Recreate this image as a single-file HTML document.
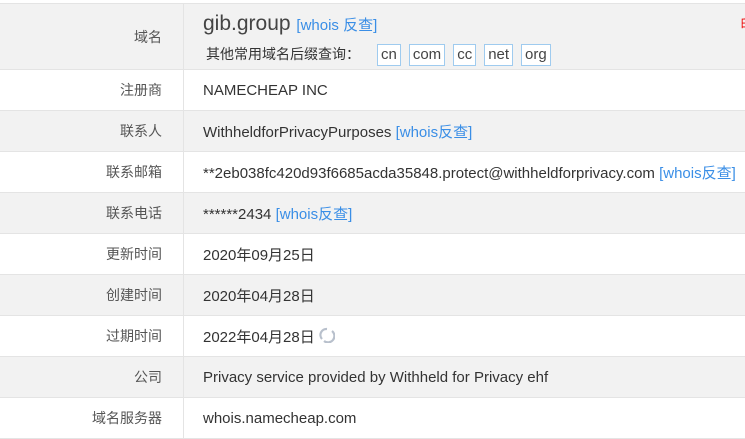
<!DOCTYPE html>
<html><head><meta charset="utf-8"><style>
body{margin:0;width:745px;height:438px;overflow:hidden;background:#fff;font-family:"Liberation Sans","Noto Sans CJK SC",sans-serif;color:#333;position:relative}
table{border-collapse:collapse;position:absolute;top:3px;left:0;width:760px}
td{border-top:1px solid #e4e4e4;border-bottom:1px solid #e4e4e4;height:40px;font-size:15px;padding:0}
td.l{width:162px;padding-right:21px;text-align:right;color:#555;font-size:14px;border-right:1px solid #e4e4e4}
td.v{padding-left:19px}
tr.g td{background:#f2f2f2}
a{color:#3a8ee6;text-decoration:none}
.tag{display:inline-block;border:1px solid #9fcbef;padding:0 3px;height:20px;line-height:20px;margin-right:8px;font-size:15px;color:#444;background:#fff}
</style></head><body>
<table>
<tr class="g"><td class="l" style="height:65px">域名</td><td class="v" style="padding-top:3px">
<div style="font-size:21px;color:#444;line-height:26px">gib.group <a style="font-size:15px">[whois 反查]</a></div>
<div style="font-size:14px;margin-top:4px;line-height:22px;padding-left:3px">其他常用域名后缀查询：<span style="display:inline-block;width:17px"></span><span class="tag">cn</span><span class="tag">com</span><span class="tag">cc</span><span class="tag">net</span><span class="tag">org</span></div>
</td></tr>
<tr><td class="l">注册商</td><td class="v">NAMECHEAP INC</td></tr>
<tr class="g"><td class="l">联系人</td><td class="v">WithheldforPrivacyPurposes <a>[whois反查]</a></td></tr>
<tr><td class="l">联系邮箱</td><td class="v" style="white-space:nowrap">**2eb038fc420d93f6685acda35848.protect@withheldforprivacy.com <a>[whois反查]</a></td></tr>
<tr class="g"><td class="l">联系电话</td><td class="v">******2434 <a>[whois反查]</a></td></tr>
<tr><td class="l">更新时间</td><td class="v">2020年09月25日</td></tr>
<tr class="g"><td class="l">创建时间</td><td class="v">2020年04月28日</td></tr>
<tr><td class="l">过期时间</td><td class="v">2022年04月28日 <svg width="16" height="16" viewBox="0 0 16 16" style="vertical-align:-1px"><path d="M8 2A6 6 0 0 0 3 12M5 14A6 6 0 0 0 13 4" fill="none" stroke="#b8c0cc" stroke-width="2.2"/></svg></td></tr>
<tr class="g"><td class="l">公司</td><td class="v">Privacy service provided by Withheld for Privacy ehf</td></tr>
<tr><td class="l">域名服务器</td><td class="v">whois.namecheap.com</td></tr>
</table>
<div style="position:absolute;left:740px;top:14px;color:#e00;font-size:12px">白</div>
</body></html>
